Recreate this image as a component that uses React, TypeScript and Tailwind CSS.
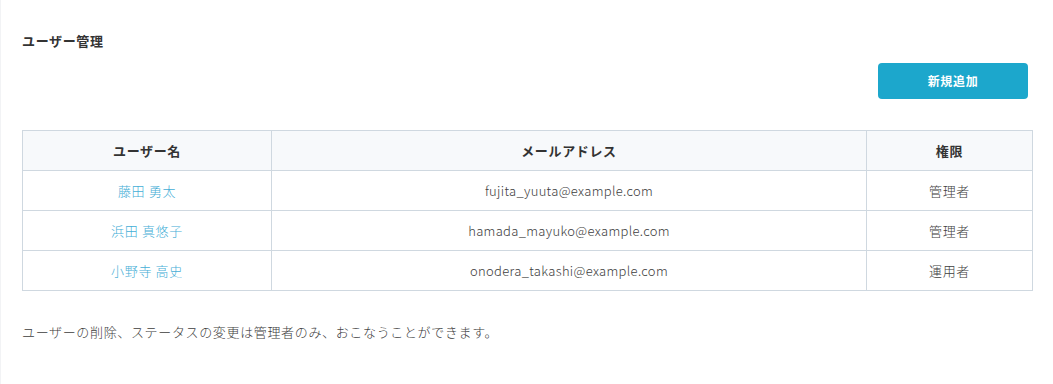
const users = [
  { name: '藤田 勇太', email: 'fujita_yuuta@example.com', role: '管理者' },
  { name: '浜田 真悠子', email: 'hamada_mayuko@example.com', role: '管理者' },
  { name: '小野寺 高史', email: 'onodera_takashi@example.com', role: '運用者' },
];

export default function App() {
  return (
    <div
      className="w-[1053px] h-[384px] bg-white border-l border-[#f2f3f5] text-[#3d3d3d] text-[13px] tracking-[0.05em]"
      style={{ fontFamily: '"Noto Sans CJK JP", "Noto Sans", sans-serif' }}
    >
      <div className="pl-[21px] pr-[20px] pt-[31px]">
        <h1 className="font-bold text-[13px] leading-[20px] text-[#333]">ユーザー管理</h1>

        <div className="flex justify-end mt-[12px] pr-[5px]">
          <button className="w-[150px] h-[36px] rounded-[4px] bg-[#1ca7cc] text-white font-bold text-[12px]">
            新規追加
          </button>
        </div>

        <table className="mt-[31px] w-[1011px] border-collapse border border-[#cfd8e0] text-center font-light">
          <thead>
            <tr className="h-[40px] bg-[#f7f9fb]">
              <th className="w-[249px] border border-[#cfd8e0] font-bold text-[#333]">ユーザー名</th>
              <th className="w-[595px] border border-[#cfd8e0] font-bold text-[#333]">メールアドレス</th>
              <th className="border border-[#cfd8e0] font-bold text-[#333]">権限</th>
            </tr>
          </thead>
          <tbody>
            {users.map((u) => (
              <tr key={u.email} className="h-[40px]">
                <td className="border border-[#cfd8e0] text-[#45aed6]">{u.name}</td>
                <td className="border border-[#cfd8e0] tracking-[0.025em]">{u.email}</td>
                <td className="border border-[#cfd8e0]">{u.role}</td>
              </tr>
            ))}
          </tbody>
        </table>

        <p className="mt-[31px] leading-[20px] font-light">
          ユーザーの削除、ステータスの変更は管理者のみ、おこなうことができます。
        </p>
      </div>
    </div>
  );
}
